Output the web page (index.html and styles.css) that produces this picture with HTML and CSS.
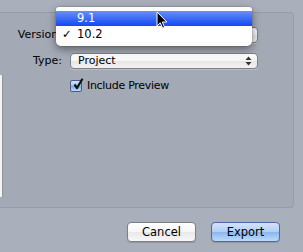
FILE: index.html
```html
<!DOCTYPE html>
<html>
<head>
<meta charset="utf-8">
<link rel="stylesheet" href="styles.css">
</head>
<body>
<div class="window">
  <div class="group">
    <label class="label row1">Version:</label>
    <div class="popup row1"><span class="popup-text">10.2</span><span class="arrows"></span></div>
    <label class="label row2">Type:</label>
    <div class="popup row2"><span class="popup-text">Project</span><span class="arrows"><svg width="7" height="10" viewBox="0 0 7 10"><path d="M3.5 0.5 L6.5 4 L0.5 4 Z M0.5 6 L6.5 6 L3.5 9.5 Z" fill="#333"/></svg></span></div>
    <div class="list"></div>
    <div class="check-row">
      <span class="checkbox"><svg width="12" height="13" viewBox="0 0 12 13"><path d="M2.5 6.5 L5 10 L10.5 0.8" fill="none" stroke="#111" stroke-width="2.2" stroke-linejoin="round"/></svg></span>
      <span class="check-label">Include Preview</span>
    </div>
  </div>
  <div class="footer">
    <button class="btn">Cancel</button>
    <button class="btn btn-default">Export</button>
  </div>

  <div class="menu">
    <div class="menu-item selected"><span class="mark"></span>9.1</div>
    <div class="menu-item"><span class="mark">✓</span>10.2</div>
  </div>
  <svg class="cursor" width="12" height="19" viewBox="0 0 12 19"><path d="M1 1 L1 15 L4.3 11.8 L6.6 17.2 L8.6 16.3 L6.3 11 L10.8 11 Z" fill="#000" stroke="#fff" stroke-width="1" stroke-linejoin="round"/></svg>
</div>
</body>
</html>
```
FILE: styles.css
```css
html, body {
  margin: 0;
  padding: 0;
}
body {
  width: 303px;
  height: 252px;
  overflow: hidden;
  background: #aab0bb;
  font-family: "DejaVu Sans", "Liberation Sans", sans-serif;
  font-size: 11px;
  color: #000;
}
.window {
  position: relative;
  width: 303px;
  height: 252px;
  padding-top: 12px;
  box-sizing: border-box;
}
.group {
  margin-left: -8px;
  width: 302px;
  height: 196px;
  box-sizing: border-box;
  border: 1px solid #959ba7;
  border-radius: 4px;
  background: #a3a9b5;
  padding-top: 14px;
  display: grid;
  grid-template-columns: 10px 51px 188px;
  grid-template-rows: 16px 16px 13px 1fr;
  column-gap: 8px;
  row-gap: 10px;
}
.label {
  grid-column: 2;
  text-align: right;
  line-height: 16px;
  white-space: nowrap;
}
.row1 { grid-row: 1; }
.row2 { grid-row: 2; }
.popup {
  grid-column: 3;
  box-sizing: border-box;
  height: 16px;
  border: 1px solid #7c7f86;
  border-radius: 4px;
  background: linear-gradient(#ffffff, #f4f4f4 50%, #e6e6e6 51%, #f2f2f2);
  display: flex;
  align-items: center;
  justify-content: space-between;
  padding: 0 5px 0 7px;
  box-shadow: 0 1px 0 rgba(255,255,255,0.25);
}
.popup-text {
  line-height: 14px;
}
.arrows {
  display: flex;
  align-items: center;
}
.list {
  grid-column: 1;
  grid-row: 3 / span 2;
  margin-top: -4px;
  margin-bottom: 10px;
  background: #f3f3f3;
  border-right: 1px solid #8d929c;
}
.check-row {
  grid-column: 3;
  grid-row: 3;
  display: flex;
  align-items: center;
  gap: 5px;
}
.checkbox {
  width: 12px;
  height: 12px;
  box-sizing: border-box;
  border: 1px solid #4a5c86;
  border-radius: 2px;
  background: linear-gradient(#d4e3fa, #9ebfef 50%, #7aa6ea 51%, #c2dbf8);
  position: relative;
}
.checkbox svg {
  position: absolute;
  left: 1px;
  top: -3px;
}
.check-label {
  line-height: 13px;
  letter-spacing: -0.3px;
}
.footer {
  display: flex;
  justify-content: flex-end;
  gap: 15px;
  padding: 14px 23px 0 0;
}
.btn {
  width: 69px;
  height: 20px;
  box-sizing: border-box;
  border: 1px solid #7d7f85;
  border-radius: 4px;
  background: linear-gradient(#ffffff, #f6f6f6 50%, #e9e9e9 51%, #f7f7f7);
  font-family: "DejaVu Sans", "Liberation Sans", sans-serif;
  font-size: 11.5px;
  color: #000;
  padding: 0;
  line-height: 18px;
  box-shadow: 0 1px 1px rgba(0,0,0,0.15);
}
.btn-default {
  border-color: #4d6aa6;
  background: linear-gradient(#d3e3fb, #b2cef5 50%, #8ab5ee 51%, #bcdcfa);
}
.menu {
  position: absolute;
  left: 56px;
  top: 7px;
  width: 196px;
  height: 39px;
  box-sizing: border-box;
  background: rgba(255,255,255,0.97);
  border-radius: 3px 3px 5px 5px;
  padding-top: 4px;
  box-shadow: 0 3px 9px rgba(0,0,0,0.45), 0 0 0 0.5px rgba(0,0,0,0.15);
}
.menu-item {
  height: 16px;
  line-height: 16px;
  display: flex;
  font-size: 11.5px;
  color: #000;
}
.menu-item.selected {
  height: 15px;
  line-height: 15px;
  color: #fff;
  background: linear-gradient(#6a8ff7, #3d6cf6 50%, #1446f5);
}
.mark {
  width: 21px;
  padding-left: 6px;
  box-sizing: border-box;
}
.cursor {
  position: absolute;
  left: 156px;
  top: 11px;
}
```
